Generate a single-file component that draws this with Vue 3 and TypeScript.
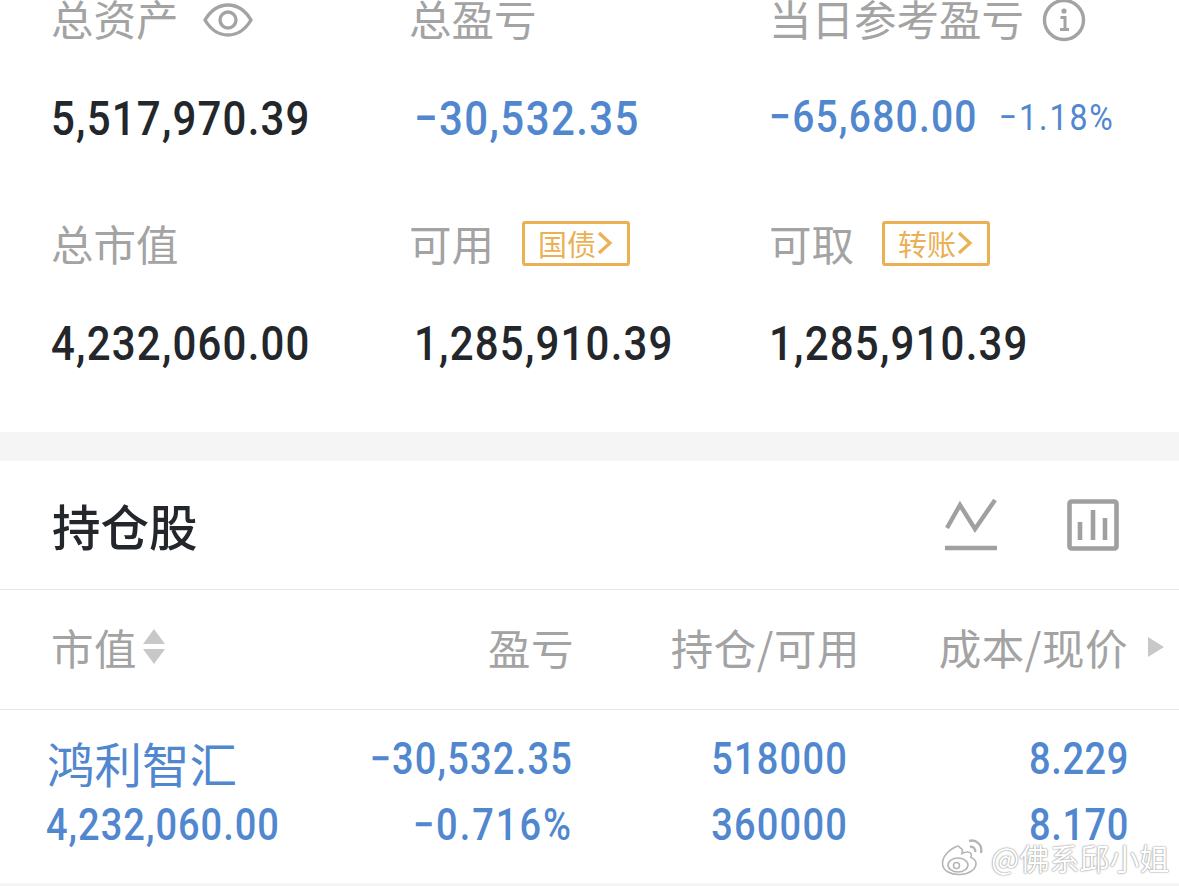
<script setup lang="ts">
interface Cell { value: string; label: string; tone: 'dark' | 'blue' }
const tableHead = ['盈亏', '持仓/可用']
const row = [
  { top: '−30,532.35', bottom: '−0.716%', cls: 'c-pl' },
  { top: '518000', bottom: '360000', cls: 'c-pos' },
  { top: '8.229', bottom: '8.170', cls: 'c-cost' },
]
const totalMarket: Cell = { label: '总市值', value: '4,232,060.00', tone: 'dark' }
</script>

<template>
  <div class="page">
    <section class="summary">
      <div class="cell">
        <div class="label">总资产
          <svg class="eye" width="50" height="36" viewBox="0 0 50 36" fill="none" stroke="#a3a3a3" stroke-width="3.4">
            <path d="M2 18C8 8 16 3 25 3s17 5 23 15c-6 10-14 15-23 15S8 28 2 18Z" />
            <circle cx="25" cy="18" r="8" />
          </svg>
        </div>
        <div class="value dark"><span class="num">5,517,970.39</span></div>
      </div>
      <div class="cell">
        <div class="label">总盈亏</div>
        <div class="value blue shift"><span class="num">−30,532.35</span></div>
      </div>
      <div class="cell">
        <div class="label">当日参考盈亏
          <svg class="info" width="44" height="44" viewBox="0 0 44 44" fill="none" stroke="#a3a3a3">
            <circle cx="22" cy="22" r="19.5" stroke-width="3.4" />
            <circle cx="22" cy="13" r="2.6" fill="#a3a3a3" stroke="none" />
            <path d="M18.5 19.5H23V31M18 31.5h9" stroke-width="3" />
          </svg>
        </div>
        <div class="value blue up">
          <span class="num">−65,680.00</span><span class="num sub">−1.18%</span>
        </div>
      </div>
      <div class="cell">
        <div class="label">{{ totalMarket.label }}</div>
        <div class="value dark"><span class="num">{{ totalMarket.value }}</span></div>
      </div>
      <div class="cell">
        <div class="label">可用
          <span class="badge">国债
            <svg width="18" height="26" viewBox="0 0 18 26" fill="none" stroke="#eab054" stroke-width="3.2"><path d="M3 3l11 10L3 23" /></svg>
          </span>
        </div>
        <div class="value dark shift"><span class="num">1,285,910.39</span></div>
      </div>
      <div class="cell">
        <div class="label">可取
          <span class="badge">转账
            <svg width="18" height="26" viewBox="0 0 18 26" fill="none" stroke="#eab054" stroke-width="3.2"><path d="M3 3l11 10L3 23" /></svg>
          </span>
        </div>
        <div class="value dark"><span class="num">1,285,910.39</span></div>
      </div>
    </section>

    <div class="band"></div>

    <section class="holdings">
      <header class="holdings-head">
        <h2>持仓股</h2>
        <div class="tools">
          <svg width="52" height="54" viewBox="0 0 52 54" fill="none" stroke="#a0a0a0" stroke-width="4.4">
            <path d="M2 30L15 7l15 24L50 2" />
            <path d="M0 50h52" stroke-width="4.6" />
          </svg>
          <svg width="52" height="52" viewBox="0 0 52 52" fill="none" stroke="#a0a0a0" stroke-width="4.6">
            <rect x="2.500" y="2.500" width="47" height="47" rx="2" />
            <path d="M13 23v18M26 11v30M38 19v22" />
          </svg>
        </div>
      </header>

      <div class="table-head">
        <div class="th-name">市值
          <svg width="22" height="36" viewBox="0 0 22 36" fill="#c8c8c8"><path d="M11 0l11 15H0zM0 20h22L11 35z" /></svg>
        </div>
        <div class="th c-pl">{{ tableHead[0] }}</div>
        <div class="th c-pos">{{ tableHead[1] }}</div>
        <div class="th c-cost">成本/现价</div>
        <svg class="more" width="16" height="20" viewBox="0 0 16 20" fill="#c8c8c8"><path d="M0 0l16 10L0 20z" /></svg>
      </div>

      <div class="table-row">
        <div class="name">
          <div class="stock">鸿利智汇</div>
          <div class="cap"><span class="num">4,232,060.00</span></div>
        </div>
        <div v-for="c in row" :key="c.cls" class="td" :class="c.cls">
          <span class="num">{{ c.top }}</span>
          <span class="num">{{ c.bottom }}</span>
        </div>
      </div>
    </section>

    <div class="band-bottom"></div>

    <div class="watermark">
      <svg width="44" height="38" viewBox="0 0 44 38" fill="#fff" stroke="#b5b5b5" stroke-width="1.6">
        <path d="M17 8C8 11 1 19 1.500 26 2 33 10 37 19 36.500c9-.5 16-5 16-11 0-4-4-5.500-5-6 1-3 0-5-3-5.500-2-.3-5 1-6 1.500 1-3 0-5-1.500-5.500C18.500 9.500 18 8 17 8Z" />
        <ellipse cx="17" cy="27" rx="10" ry="7" />
        <circle cx="15.500" cy="27.500" r="3" />
        <path d="M28 3c7-2 14 4 12 12M29 9c3-1 6 2 5 5" fill="none" stroke-width="2.400" />
      </svg>
      <span>@佛系邱小姐</span>
    </div>
  </div>
</template>

<style scoped>
.page {
  position: relative;
  width: 1179px;
  height: 886px;
  overflow: hidden;
  background: #fff;
  font-family: "Noto Sans CJK SC", "Noto Sans", sans-serif;
}
.summary {
  display: grid;
  grid-template-columns: 358px 360px 1fr;
  row-gap: 85px;
  height: 434px;
  margin-top: -2px;
  padding-left: 51px;
  box-sizing: border-box;
  align-content: start;
}
.cell { display: flex; flex-direction: column; gap: 60px; }
.label {
  display: flex;
  align-items: center;
  height: 40px;
  font-size: 42.500px;
  line-height: 40px;
  color: #a3a3a3;
  white-space: nowrap;
}
.eye { margin-left: 24px; margin-top: 4px; }
.info { margin-left: 18px; margin-top: 4px; }
.badge {
  display: flex;
  align-items: center;
  justify-content: center;
  box-sizing: border-box;
  width: 108px;
  height: 45px;
  margin: 0 0 0 28px;
  border: 3px solid #eab054;
  border-radius: 3px;
  font-size: 29px;
  line-height: 38px;
  color: #eab054;
}
.value {
  display: flex;
  align-items: center;
  height: 40px;
  font-size: 42px;
}
.num {
  display: inline-block;
  font-family: Roboto, "Liberation Sans", sans-serif;
  font-weight: 500;
  letter-spacing: 1.200px;
  white-space: nowrap;
  transform: scaleY(1.16);
}
.dark { color: #23272b; }
.blue { color: #5087cf; }
.shift { padding-left: 5px; }
.value.blue.shift .num { letter-spacing: 1.400px; }
.up { position: relative; top: -1px; font-size: 39px; }
.sub {
  margin-left: 21px;
  font-size: 32px;
  font-weight: 400;
  letter-spacing: 2px;
}
.band { height: 29px; background: #f5f5f5; }
.holdings-head {
  display: flex;
  align-items: center;
  justify-content: space-between;
  padding: 0 60px 0 52px;
  border-bottom: 1px solid #e8e8e8;
  box-sizing: border-box;
  height: 129px;
}
.holdings-head h2 {
  margin: -1px 0 0;
  font-size: 48.500px;
  font-weight: 500;
  color: #23272b;
}
.tools { display: flex; align-items: center; gap: 70px; }
.table-head {
  display: grid;
  grid-template-columns: 283px 240px 286px 268px 1fr;
  align-items: center;
  height: 120px;
  padding: 0 0 6px 51px;
  font-size: 42.500px;
  letter-spacing: 0.500px;
  color: #a3a3a3;
  border-bottom: 1px solid #e8e8e8;
  box-sizing: border-box;
}
.th-name { display: flex; align-items: center; gap: 6px; }
.th { text-align: right; white-space: nowrap; }
.more { margin-left: 20px; }
.table-row {
  display: grid;
  grid-template-columns: 285px 241px 275px 281px;
  height: 173px;
  padding-left: 47px;
  box-sizing: border-box;
  font-size: 38px;
  color: #5087cf;
}
.name { padding-top: 20px; }
.stock { font-size: 47.500px; line-height: 66px; }
.cap { font-size: 38px; line-height: 44px; margin: 4px 0 0 -1px; }
.cap .num { letter-spacing: 1px; }
.td {
  display: flex;
  flex-direction: column;
  align-items: flex-end;
  padding-top: 27px;
  line-height: 44px;
  gap: 22px;
}
.c-pl .num:last-child { letter-spacing: 2px; }
.c-cost .num { letter-spacing: 0.600px; }
.band-bottom { height: 30px; background: #f5f5f5; }
.watermark {
  position: absolute;
  left: 941px;
  top: 838px;
  display: flex;
  align-items: center;
  gap: 6px;
  font-size: 30px;
  line-height: 38px;
  color: #fff;
  text-shadow: 0 0 2px #8f8f8f, 0 0 1px #8f8f8f;
}
</style>
